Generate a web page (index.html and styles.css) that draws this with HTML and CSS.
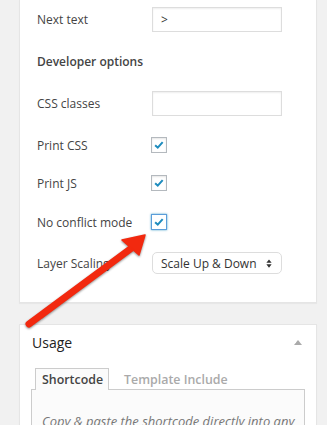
FILE: index.html
```html
<!DOCTYPE html>
<html lang="en">
<head>
  <meta charset="UTF-8" />
  <title>Slider settings</title>
  <link rel="stylesheet" href="styles.css">
</head>
<body>

  <!-- Ajustes -->
  <section class="box box-settings">
    <div class="row row-1">
      <span class="label">Next text</span>
      <input type="text" class="text-field" value="&gt;" />
    </div>
    <div class="row row-2">
      <span class="label label-section">Developer options</span>
    </div>
    <div class="row row-3">
      <span class="label">CSS classes</span>
      <input type="text" class="text-field" value="" />
    </div>
    <div class="row row-4">
      <span class="label">Print CSS</span>
      <span class="check"><svg viewBox="0 0 16 16"><path d="M3.6 8.2 L6.6 11 L12.2 4.8" /></svg></span>
    </div>
    <div class="row row-5">
      <span class="label">Print JS</span>
      <span class="check"><svg viewBox="0 0 16 16"><path d="M3.6 8.2 L6.6 11 L12.2 4.8" /></svg></span>
    </div>
    <div class="row row-6">
      <span class="label">No conflict mode</span>
      <span class="check check-focus"><svg viewBox="0 0 16 16"><path d="M3.6 8.2 L6.6 11 L12.2 4.8" /></svg></span>
    </div>
    <div class="row row-7">
      <span class="label">Layer Scaling</span>
      <div class="select">
        <span>Scale Up &amp; Down</span>
        <svg viewBox="0 0 8 12"><path d="M4 0.5 L7.5 5 L0.5 5 Z M0.5 7 L7.5 7 L4 11.5 Z" /></svg>
      </div>
    </div>
  </section>

  <!-- Uso -->
  <section class="box box-usage">
    <div class="box-head">
      <h3>Usage</h3>
      <svg class="toggle" viewBox="0 0 8 5"><path d="M4 0 L8 5 L0 5 Z" /></svg>
    </div>
    <div class="tabs">
      <span class="tab tab-active">Shortcode</span>
      <span class="tab">Template Include</span>
    </div>
    <div class="tab-panel">
      <p>Copy &amp; paste the shortcode directly into any WordPress post or page.</p>
    </div>
  </section>

  <!-- Flecha -->
  <svg class="arrow" width="327" height="425" viewBox="0 0 327 425">
    <g class="arrow-body">
      <line x1="29" y1="324" x2="133" y2="247" />
      <polygon points="145,235 122,240 139,255" />
    </g>
  </svg>

</body>
</html>
```

FILE: styles.css
```css
body {
  margin: 0;
  background: #f1f1f1;
  font-family: "Open Sans", "Liberation Sans", sans-serif;
  color: #444;
  position: relative;
  height: 425px;
  overflow: hidden;
}

.box {
  width: 296px;
  margin-left: 19px;
  background: white;
  border: 1px solid #e5e5e5;
  box-shadow: 0 1px 1px rgba(0,0,0,0.04);
}

.box-settings {
  border-top: none;
  padding: 0 0 22px 17px;
  box-sizing: content-box;
  width: 279px;
}

.row {
  display: flex;
  align-items: center;
  font-size: 12px;
}

.row-1 { height: 38px; }
.row-2 { height: 46px; }
.row-3 { height: 38px; }
.row-4 { height: 46px; }
.row-5 { height: 30px; }
.row-6 { height: 48px; }
.row-7 { height: 34px; }

.label {
  width: 115px;
  flex-shrink: 0;
}

.label-section {
  width: auto;
  font-weight: 600;
}

.text-field {
  width: 130px;
  height: 25px;
  box-sizing: border-box;
  margin: 0;
  padding: 0 8px;
  border: 1px solid #ddd;
  box-shadow: inset 0 1px 2px rgba(0,0,0,0.07);
  font-family: inherit;
  font-size: 12px;
  color: #333;
  background: white;
}

.check {
  width: 16px;
  height: 16px;
  box-sizing: border-box;
  margin-left: -1px;
  border: 1px solid #b4b9be;
  box-shadow: inset 0 1px 2px rgba(0,0,0,0.1);
  background: white;
  display: flex;
}

.check svg {
  width: 14px;
  height: 14px;
}

.check path {
  fill: none;
  stroke: #1e8cbe;
  stroke-width: 2.3;
}

.check-focus {
  border-color: #5b9dd9;
  box-shadow: 0 0 2px rgba(30,140,190,0.8);
}

.select {
  width: 130px;
  height: 22px;
  box-sizing: border-box;
  border: 1px solid #ddd;
  border-radius: 5px;
  display: flex;
  align-items: center;
  justify-content: space-between;
  padding: 0 9px 0 8px;
  color: #333;
  background: white;
}

.select svg {
  width: 6px;
  height: 9px;
}

.select path {
  fill: #333;
}

.box-usage {
  margin-top: 21px;
  padding: 0 11px 40px 11px;
  width: 274px;
}

.box-head {
  display: flex;
  align-items: center;
  justify-content: space-between;
  padding: 8px 1px 8px 1px;
}

.box-head h3 {
  margin: 0;
  font-size: 14px;
  font-weight: 400;
  line-height: 19px;
  color: #222;
}

.toggle {
  width: 8px;
  height: 5px;
  margin-right: 2px;
}

.toggle path {
  fill: #aaa;
}

.tabs {
  display: flex;
  gap: 8px;
  padding: 0 0 0 4px;
  margin-top: 8px;
  position: relative;
  z-index: 1;
}

.tab {
  font-size: 12.4px;
  font-weight: 600;
  line-height: 17px;
  padding: 2px 5px 1px 6px;
  color: #aaa;
  border: 1px solid transparent;
  border-bottom: none;
}

.tab-active {
  color: #444;
  border-color: #ccc;
  background: #fbfbfb;
  margin-bottom: -1px;
  padding-bottom: 2px;
}

.tab-panel {
  border: 1px solid #ccc;
  background: #fbfbfb;
  padding: 22px 4px 22px 10px;
}

.tab-panel p {
  margin: 0;
  font-size: 13px;
  line-height: 19px;
  font-style: italic;
  color: #777;
}

.arrow {
  position: absolute;
  top: 0;
  left: 0;
  pointer-events: none;
  filter: drop-shadow(0 1px 1px rgba(0,0,0,0.45));
}

.arrow-body line {
  stroke: #f2290f;
  stroke-width: 7;
  stroke-linecap: round;
}

.arrow-body polygon {
  fill: #f2290f;
  stroke: #f2290f;
  stroke-width: 1.5;
  stroke-linejoin: round;
}
```
